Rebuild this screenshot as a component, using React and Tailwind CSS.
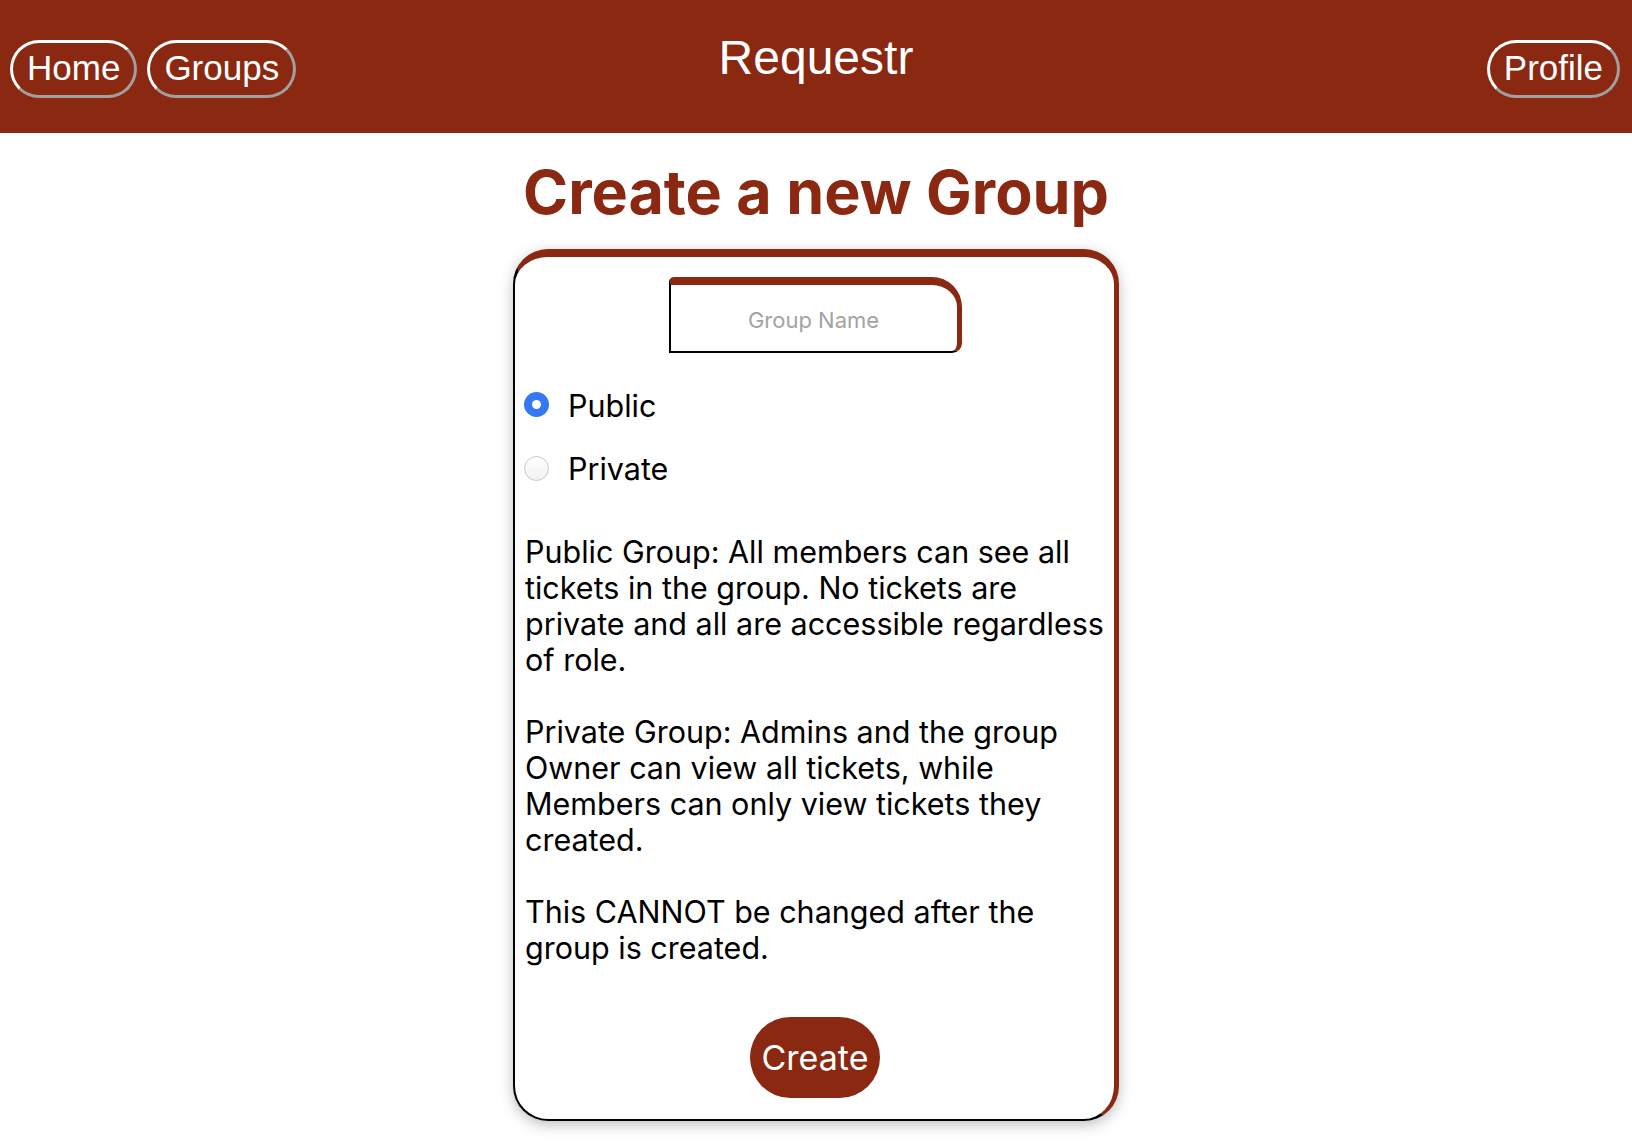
import React from "react";

const navBtn =
  "rounded-full border-[3px] border-solid border-white border-r-[#a0a0a0] border-b-[#a0a0a0] px-[14px] pt-[5px] pb-[7px] text-[35px] leading-[40px] text-white bg-transparent";

function Radio({ checked }) {
  if (checked) {
    return (
      <span className="flex h-[25px] w-[25px] shrink-0 items-center justify-center rounded-full bg-[#3478f6]">
        <span className="h-[9px] w-[9px] rounded-full bg-white" />
      </span>
    );
  }
  return (
    <span className="block h-[25px] w-[25px] shrink-0 rounded-full border border-[#c9c9c9] bg-gradient-to-b from-white to-[#f1f1f1]" />
  );
}

export default function App() {
  return (
    <div className="min-h-[1148px] bg-white font-['Inter','Noto_Sans',sans-serif] text-black">
      <header className="grid h-[133px] grid-cols-[1fr_auto_1fr] bg-[#8a2812] font-['Liberation_Sans',Arial,sans-serif]">
        <div className="flex items-start gap-[10px] pl-[10px] pt-[40px]">
          <button className={navBtn}>Home</button>
          <button className={navBtn}>Groups</button>
        </div>
        <div className="pt-[30px] text-[48px] leading-[55px] text-white">Requestr</div>
        <div className="flex items-start justify-end pr-[12px] pt-[40px]">
          <button className={navBtn}>Profile</button>
        </div>
      </header>

      <main className="flex flex-col items-center">
        <h1 className="mt-[23px] text-[61px] font-bold leading-[73px] text-[#8a2812]">
          Create a new Group
        </h1>

        <div className="mt-[20px] flex w-[606px] flex-col rounded-[35px] border-t-[8px] border-r-[5px] border-b-[2px] border-l-[2px] border-t-[#8a2812] border-r-[#8a2812] border-b-black border-l-black bg-white pl-[9px] pr-[8px] pb-[21px] shadow-[0_4px_14px_rgba(0,0,0,0.25)]">
          <input
            type="text"
            placeholder="Group Name"
            className="mx-auto mt-[20px] h-[76px] w-[293px] rounded-tl-[5px] rounded-tr-[30px] rounded-br-[10px] rounded-bl-none border-t-[8px] border-r-[5px] border-b-[2px] border-l-[2px] border-t-[#8a2812] border-r-[#8a2812] border-b-black border-l-black pt-[4px] text-center text-[22px] outline-none placeholder:text-[#a3a3a3]"
          />

          <label className="mt-[33px] flex h-[36px] items-center gap-[19px]">
            <Radio checked />
            <span className="mt-[3px] text-[30.5px] leading-[36px]">Public</span>
          </label>
          <label className="mt-[28px] flex h-[36px] items-center gap-[19px]">
            <Radio />
            <span className="mt-[2px] text-[30.5px] leading-[36px]">Private</span>
          </label>

          <div className="mt-[48px] pl-[1px] text-[30.5px] leading-[36px]">
            <p>
              Public Group: All members can see all tickets in the group. No
              tickets are private and all are accessible regardless of role.
            </p>
            <p className="mt-[36px]">
              Private Group: Admins and the group Owner can view all tickets,
              while Members can only view tickets they created.
            </p>
            <p className="mt-[36px]">
              This CANNOT be changed after the group is created.
            </p>
          </div>

          <button className="mx-auto mt-[51px] h-[81px] w-[130px] rounded-full bg-[#8a2812] text-[34px] text-white">
            Create
          </button>
        </div>
      </main>
    </div>
  );
}
